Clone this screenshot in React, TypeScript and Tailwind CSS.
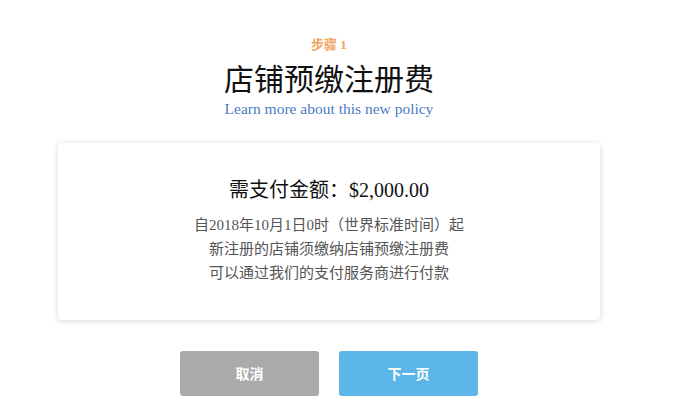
export default function App() {
  return (
    <div
      className="w-[658px] h-[420px] bg-white flex flex-col items-center"
      style={{ fontFamily: '"Liberation Serif", "Noto Sans CJK SC", serif' }}
    >
      <div className="mt-[36px] text-[13px] leading-[18px] font-bold text-[#f0a45a]">步骤 1</div>
      <h1 className="mt-[8px] text-[30px] leading-[36px] text-[#111]">店铺预缴注册费</h1>
      <a className="mt-[2px] text-[15.5px] leading-[18px] text-[#4a7cbf]">Learn more about this new policy</a>
      <div className="mt-[25px] w-[542px] h-[177px] bg-white rounded-[4px] shadow-[0_1px_6px_rgba(0,0,0,0.16)] flex flex-col items-center">
        <div className="mt-[34px] text-[20px] leading-[26px] text-[#111]">需支付金额：$2,000.00</div>
        <div className="mt-[10px] text-[15px] leading-[24px] text-[#555] text-center">
          <div>自2018年10月1日0时（世界标准时间）起</div>
          <div>新注册的店铺须缴纳店铺预缴注册费</div>
          <div>可以通过我们的支付服务商进行付款</div>
        </div>
      </div>
      <div className="mt-[31px] flex gap-[20px]">
        <button className="w-[139px] h-[45px] rounded-[3px] bg-[#aaaaaa] text-white font-bold text-[14px]" style={{ fontFamily: '"Noto Sans CJK SC", sans-serif' }}>取消</button>
        <button className="w-[139px] h-[45px] rounded-[3px] bg-[#5db6e8] text-white font-bold text-[14px]" style={{ fontFamily: '"Noto Sans CJK SC", sans-serif' }}>下一页</button>
      </div>
    </div>
  );
}
